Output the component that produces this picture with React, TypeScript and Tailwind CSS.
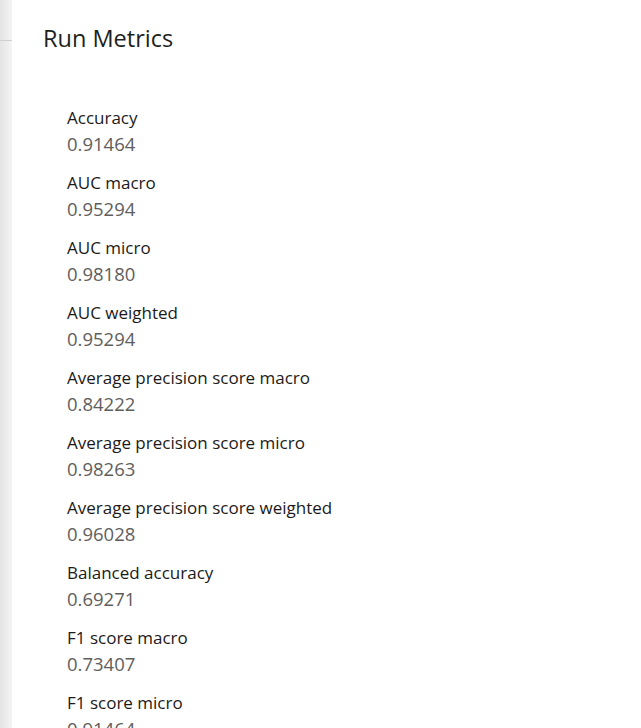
import React from "react";

const metrics: [string, string][] = [
  ["Accuracy", "0.91464"],
  ["AUC macro", "0.95294"],
  ["AUC micro", "0.98180"],
  ["AUC weighted", "0.95294"],
  ["Average precision score macro", "0.84222"],
  ["Average precision score micro", "0.98263"],
  ["Average precision score weighted", "0.96028"],
  ["Balanced accuracy", "0.69271"],
  ["F1 score macro", "0.73407"],
  ["F1 score micro", "0.91464"],
  ["F1 score weighted", "0.90512"],
];

export default function App() {
  return (
    <div
      className="flex h-[728px] w-[641px] overflow-hidden bg-white"
      style={{ fontFamily: '"Open Sans", "Noto Sans", sans-serif' }}
    >
      <div className="flex w-[12px] shrink-0 flex-col bg-gradient-to-r from-[#e4e4e4] to-[#f4f4f4]">
        <div className="h-[40px]" />
        <div className="h-px bg-[#cfcfcf]" />
      </div>
      <div className="flex flex-1 flex-col">
        <div className="pl-[31px] pt-[22px] text-[23.5px] leading-[32px] text-[#201f1e]">
          Run Metrics
        </div>
        <div className="mt-[53px] flex flex-col gap-[13px] pl-[55px]">
          {metrics.map(([label, value]) => (
            <div key={label} className="flex flex-col">
              <div className="text-[17px] font-medium leading-[22px] text-[#1b1a19]">
                {label}
              </div>
              <div className="text-[18.5px] leading-[30px] text-[#605e5c]">{value}</div>
            </div>
          ))}
        </div>
      </div>
    </div>
  );
}
